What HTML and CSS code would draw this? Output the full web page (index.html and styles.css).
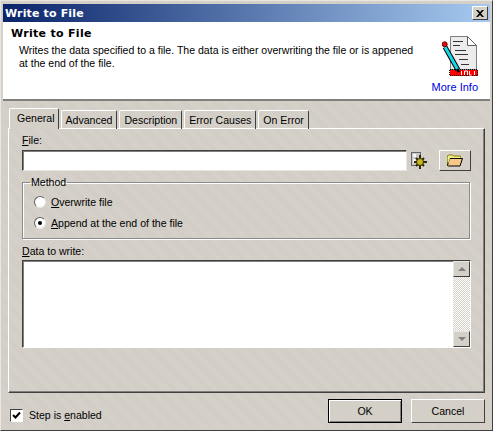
FILE: index.html
```html
<!DOCTYPE html>
<html lang="en">
<head>
<meta charset="utf-8">
<title>Write to File</title>
<link rel="stylesheet" href="styles.css">
</head>
<body>
<div class="window">
  <div class="titlebar">
    <span class="title-text">Write to File</span>
    <button class="close" aria-label="Close"><svg width="8" height="7" viewBox="0 0 8 7"><path d="M0 0h2l2 2 2-2h2L5 3.500l3 3.500H6L4 5 2 7H0l3-3.500z" fill="#000"/></svg></button>
  </div>
  <header class="banner">
    <div class="banner-text">
      <h1 class="banner-title">Write to File</h1>
      <p class="banner-desc">Writes the data specified to a file. The data is either overwriting the file or is appened at the end of the file.</p>
    </div>
    <div class="banner-side">
      <svg class="doc-icon" width="36" height="40" viewBox="0 0 36 40">
        <path d="M8.500 0.500h17l9 9v24h-26z" fill="#ececec" stroke="#808080"/>
        <path d="M25.500 0.500v9h9z" fill="#fff" stroke="#606060"/>
        <path d="M11 5.500h10M11 9.500h7M13 14.500h11M13 18.500h13M17 23.500h9M19 28.500h8" stroke="#333" fill="none"/>
        <rect x="8" y="34" width="28" height="6" fill="#f00"/>
        <path d="M8 33.500h28M8 39.500h28M7.500 34v6M35.500 34v6" stroke="#000" stroke-dasharray="1 1"/>
        <path d="M19.500 35v4M22.500 39v-4h3v4M27.500 35v4h2M32.500 35v4" stroke="#fff" fill="none"/>
        <path d="M3 11l13 23" stroke="#000" stroke-width="5"/>
        <path d="M3 11l13 23" stroke="#19d7e6" stroke-width="3"/>
        <circle cx="2.700" cy="8.300" r="2.500" fill="#d8101a" stroke="#700"/>
        <path d="M15 33l2 3" stroke="#000" stroke-width="2.500"/>
      </svg>
      <a class="more-info">More Info</a>
    </div>
  </header>
  <div class="body">
    <div class="tabs">
      <div class="tab active">General</div>
      <div class="tab">Advanced</div>
      <div class="tab">Description</div>
      <div class="tab">Error Causes</div>
      <div class="tab">On Error</div>
    </div>
    <div class="panel">
      <label class="field-label"><u>F</u>ile:</label>
      <div class="file-row">
        <div class="input"></div>
        <svg class="gear-icon" width="16" height="17" viewBox="0 0 16 17">
          <rect x="0.500" y="0.500" width="9" height="13" fill="#c8c8c8" stroke="#666"/>
          <rect x="2" y="2" width="3" height="3" fill="#f4f4f4"/>
          <rect x="2" y="7" width="3" height="4" fill="#f4f4f4"/>
          <path d="M9 3v3M3 10h3M12 10h4M9 14v3M5 6l2 2M13 6l-2 2M5 14l2-2M13 14l-2-2" stroke="#2e2a00" stroke-width="2"/>
          <circle cx="9" cy="10" r="3.500" fill="#c8b820" stroke="#2e2a00"/>
        </svg>
        <button class="browse" aria-label="Browse"><svg width="16" height="13" viewBox="0 0 16 13">
          <path d="M0.500 11.500V2l1-1h4l1 1h7v2" fill="#f5ec8c" stroke="#8a8000"/>
          <path d="M0.500 11.500l2-7h13l-2.500 7.500H1.500z" fill="#f6c888" stroke="#000"/>
          <path d="M0.500 3h13v1H3L1 10z" fill="#f5ec8c"/>
        </svg></button>
      </div>
      <fieldset class="group">
        <legend class="group-legend">Method</legend>
        <div class="radio-row">
          <span class="radio"></span>
          <span><u>O</u>verwrite file</span>
        </div>
        <div class="radio-row">
          <span class="radio checked"></span>
          <span><u>A</u>ppend at the end of the file</span>
        </div>
      </fieldset>
      <label class="field-label data-label"><u>D</u>ata to write:</label>
      <div class="textarea">
        <div class="text-fill"></div>
        <div class="scrollbar">
          <div class="scroll-btn"><span class="arrow up"></span></div>
          <div class="scroll-track"></div>
          <div class="scroll-btn"><span class="arrow down"></span></div>
        </div>
      </div>
    </div>
    <footer class="footer">
      <div class="check-row">
        <span class="checkbox"><svg width="9" height="9" viewBox="0 0 9 9"><path d="M1 4l2.500 2.500L8 1.500" fill="none" stroke="#000" stroke-width="2"/></svg></span>
        <span>Step is <u>e</u>nabled</span>
      </div>
      <div class="actions">
        <button class="btn ok">OK</button>
        <button class="btn">Cancel</button>
      </div>
    </footer>
  </div>
</div>
</body>
</html>
```
FILE: styles.css
```css
* { box-sizing: border-box; }
html, body { margin: 0; padding: 0; }
body {
  width: 493px;
  height: 431px;
  overflow: hidden;
  font-family: "Liberation Sans", Arial, sans-serif;
  font-size: 10.55px;
  color: #000;
  background: #d4d0c8;
}
.window {
  width: 493px;
  height: 431px;
  display: flex;
  flex-direction: column;
  border: 1px solid;
  border-color: #e8e6e0 #404040 #404040 #e8e6e0;
  background: #d4d0c8;
  padding: 3px 2px 2px 2px;
}
.titlebar {
  height: 18px;
  flex: none;
  display: flex;
  align-items: center;
  justify-content: space-between;
  padding: 0 2px 0 2px;
  background: linear-gradient(90deg, #0a246a, #a6caf0);
}
.title-text {
  color: #fff;
  font-family: "DejaVu Sans", sans-serif;
  font-weight: 700;
  font-size: 11px;
  letter-spacing: 0.15px;
}
.close {
  width: 16px;
  height: 14px;
  padding: 0;
  display: flex;
  align-items: center;
  justify-content: center;
  background: #d4d0c8;
  border: 1px solid;
  border-color: #fff #404040 #404040 #fff;
}
.banner {
  height: 79px;
  flex: none;
  display: flex;
  justify-content: space-between;
  background: #fff;
  border-bottom: 2px solid #808080;
}
.banner-text { padding: 5px 0 0 8px; width: 420px; }
.banner-title {
  margin: 0;
  font-family: "DejaVu Sans", sans-serif;
  font-weight: 700;
  font-size: 11px;
  line-height: 14px;
  letter-spacing: 0.3px;
}
.banner-desc {
  margin: 3px 0 0 8px;
  line-height: 13px;
}
.banner-side {
  display: flex;
  flex-direction: column;
  align-items: flex-end;
  padding: 14px 12px 0 0;
}
.doc-icon { display: block; }
.more-info { color: #0000e0; margin-top: 5px; line-height: 13px; font-size: 11px; }
.body {
  flex: 1;
  display: flex;
  flex-direction: column;
  padding: 7px 5px 0 5px;
  background:
    repeating-linear-gradient(45deg, rgba(255,255,255,.07) 0 1px, rgba(0,0,0,.02) 1px 2px),
    #d4d0c8;
}
.tabs {
  display: flex;
  height: 21px;
  flex: none;
  padding-left: 1px;
  position: relative;
  z-index: 1;
  align-items: flex-end;
}
.tab {
  height: 19px;
  padding: 2px 4px 0 4px;
  margin-right: 2px;
  border: 1px solid;
  border-color: #fff #404040 transparent #fff;
  border-bottom: 0;
  border-radius: 2px 2px 0 0;
  white-space: nowrap;
  line-height: 14px;
}
.tab.active { height: 21px; padding: 2px 3px 0 7px; background: #d4d0c8; margin-right: 2px; }
.panel {
  height: 265px;
  flex: none;
  margin-top: -1px;
  border: 1px solid;
  border-color: #fff #404040 #404040 #fff;
  box-shadow: inset -1px -1px 0 #808080;
  padding: 4px 13px 0 13px;
  display: flex;
  flex-direction: column;
}
.field-label { line-height: 14px; display: block; }
.file-row {
  display: flex;
  align-items: flex-start;
  margin-top: 3px;
  height: 21px;
}
.input {
  width: 386px;
  height: 21px;
  background: #fff;
  border: 1px solid;
  border-color: #404040 #e8e6e0 #e8e6e0 #404040;
  box-shadow: inset 1px 1px 0 #808080;
}
.gear-icon { margin: 2px 0 0 4px; flex: none; }
.browse {
  width: 32px;
  height: 21px;
  margin-left: 12px;
  padding: 0;
  display: flex;
  align-items: center;
  justify-content: center;
  background: #d4d0c8;
  border: 1px solid;
  border-color: #fff #404040 #404040 #fff;
}
.group {
  margin: 5px 0 0 0;
  padding: 6px 0 0 11px;
  height: 63px;
  width: 448px;
  border: 1px solid #8a8a8a;
  box-shadow: 1px 1px 0 #fff, inset 1px 1px 0 #fff;
}
.group-legend { padding: 0 1px; margin-left: -4px; line-height: 13px; }
.radio-row {
  display: flex;
  align-items: center;
  gap: 5px;
  height: 14px;
  margin-bottom: 7px;
  line-height: 14px;
}
.radio {
  width: 12px;
  height: 12px;
  flex: none;
  border-radius: 50%;
  background: #fff;
  border: 1px solid;
  border-color: #606060 #e8e6e0 #e8e6e0 #606060;
  display: flex;
  align-items: center;
  justify-content: center;
}
.radio.checked::after {
  content: "";
  width: 4px;
  height: 4px;
  border-radius: 50%;
  background: #000;
}
.data-label { margin-top: 5px; }
.textarea {
  width: 449px;
  height: 88px;
  margin-top: 2px;
  display: flex;
  border: 1px solid;
  border-color: #404040 #fff #fff #404040;
  box-shadow: inset 1px 1px 0 #808080;
  background: #fff;
  padding: 0;
}
.text-fill { flex: 1; }
.scrollbar {
  width: 17px;
  flex: none;
  display: flex;
  flex-direction: column;
}
.scroll-btn {
  height: 16px;
  flex: none;
  background: #d4d0c8;
  border: 1px solid;
  border-color: #e8e6e0 #404040 #404040 #e8e6e0;
  display: flex;
  align-items: center;
  justify-content: center;
}
.scroll-track {
  flex: 1;
  background: repeating-conic-gradient(#d4d0c8 0 25%, #fff 0 50%) 0 0 / 2px 2px;
}
.arrow { width: 0; height: 0; border-left: 4px solid transparent; border-right: 4px solid transparent; }
.arrow.up { border-bottom: 4px solid #808080; }
.arrow.down { border-top: 4px solid #808080; }
.footer {
  flex: 1;
  display: flex;
  justify-content: space-between;
}
.check-row {
  display: flex;
  align-items: center;
  gap: 6px;
  height: 14px;
  margin: 15px 0 0 2px;
}
.checkbox {
  width: 13px;
  height: 13px;
  background: #fff;
  border: 1px solid;
  border-color: #404040 #fff #fff #404040;
  display: flex;
  align-items: center;
  justify-content: center;
}
.actions { display: flex; gap: 9px; margin-top: 6px; }
.btn {
  width: 74px;
  height: 24px;
  padding: 0;
  font: inherit;
  color: #000;
  background: #d4d0c8;
  border: 1px solid;
  border-color: #fff #404040 #404040 #fff;
}
.btn.ok { border-color: #000; box-shadow: inset 1px 1px 0 #fff, inset -1px -1px 0 #808080; }
```
